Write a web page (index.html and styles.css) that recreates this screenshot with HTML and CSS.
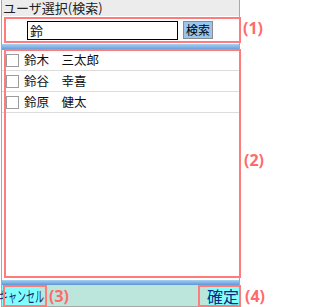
FILE: index.html
```html
<!DOCTYPE html>
<html lang="ja">
<head>
<meta charset="utf-8">
<link rel="stylesheet" href="styles.css">
</head>
<body>
<div class="page">
  <div class="app">
    <div class="title">ユーザ選択(検索)</div>
    <div class="search">
      <div class="input">鈴</div>
      <div class="btn">検索</div>
    </div>
    <div class="bar"></div>
    <ul class="list">
      <li class="row"><span class="check"></span><span class="name">鈴木　三太郎</span></li>
      <li class="row"><span class="check"></span><span class="name">鈴谷　幸喜</span></li>
      <li class="row"><span class="check"></span><span class="name">鈴原　健太</span></li>
    </ul>
    <div class="bar bar-bottom"></div>
    <div class="footer">
      <div class="cancel"><span class="cancel-text">キャンセル</span></div>
      <span class="ok">確定</span>
    </div>
  </div>

  <div class="ann box1"></div>
  <div class="ann box2"></div>
  <div class="ann box3"></div>
  <div class="ann box4"></div>
  <div class="tag tag1">(1)</div>
  <div class="tag tag2">(2)</div>
  <div class="tag tag3">(3)</div>
  <div class="tag tag4">(4)</div>
</div>
</body>
</html>
```
FILE: styles.css
```css
html, body {
  margin: 0;
  padding: 0;
  background: #fff;
}
body {
  font-family: "Noto Sans CJK JP", "Noto Sans", sans-serif;
  font-size: 12px;
  color: #111;
}
.page {
  position: relative;
  width: 270px;
  height: 307px;
  overflow: hidden;
}
.app {
  margin-left: 1px;
  width: 239px;
  box-sizing: border-box;
  border-left: 1px solid #a8a8a8;
  border-right: 1px solid #a8a8a8;
  border-bottom: 1px solid #a8a8a8;
  display: flex;
  flex-direction: column;
}
.title {
  height: 16px;
  line-height: 16px;
  background: #ececec;
  padding-left: 1px;
  font-size: 13px;
  color: #222;
  white-space: nowrap;
}
.search {
  height: 28px;
  box-sizing: border-box;
  padding: 5px 0 0 25px;
  display: flex;
  align-items: flex-start;
  gap: 5px;
}
.input {
  box-sizing: border-box;
  width: 151px;
  height: 19px;
  border: 1px solid #000;
  padding-left: 2px;
  font-size: 13px;
  line-height: 17px;
  background: #fff;
}
.btn {
  box-sizing: border-box;
  width: 30px;
  height: 18px;
  border: 1px solid #8c8c8c;
  background: #99c6ee;
  font-size: 12px;
  line-height: 16px;
  text-align: center;
  color: #000;
}
.bar {
  height: 6px;
  background: linear-gradient(#a8d0f2, #5b98d6);
}
.bar-bottom {
  height: 5px;
}
.list {
  list-style: none;
  margin: 0;
  padding: 0;
  height: 230px;
}
.row {
  height: 20px;
  border-bottom: 1px solid #dcdcdc;
  display: flex;
  align-items: center;
  gap: 5px;
  padding-left: 4px;
}
.check {
  width: 13px;
  height: 13px;
  box-sizing: border-box;
  border: 1px solid #9c9c9c;
  background: #fff;
}
.name {
  font-size: 12.5px;
  line-height: 20px;
  color: #111;
}
.footer {
  height: 21px;
  background: #bce5db;
  display: flex;
  justify-content: space-between;
  align-items: flex-end;
}
.cancel {
  width: 38px;
  height: 21px;
  background: #80ffff;
  display: flex;
  justify-content: center;
  align-items: center;
  overflow: visible;
}
.cancel-text {
  display: inline-block;
  flex: none;
  font-size: 15px;
  line-height: 21px;
  color: #14287a;
  transform: scaleX(0.6);
  white-space: nowrap;
}
.ok {
  background: #80ffff;
  font-size: 16px;
  line-height: 19px;
  color: #14287a;
  padding: 0;
}
.ann {
  position: absolute;
  box-sizing: border-box;
  border: 2px solid #ff7c7c;
}
.box1 { left: 4px; top: 17px; width: 237px; height: 26px; }
.box2 { left: 4px; top: 49px; width: 237px; height: 229px; }
.box3 { left: 3px; top: 285px; width: 44px; height: 22px; }
.box4 { left: 198px; top: 285px; width: 43px; height: 22px; }
.tag {
  position: absolute;
  font-family: "Noto Sans", "DejaVu Sans", sans-serif;
  font-weight: 700;
  font-size: 16px;
  line-height: 20px;
  color: #ff6b6b;
}
.tag1 { left: 243px; top: 18px; }
.tag2 { left: 244px; top: 150px; }
.tag3 { left: 49px; top: 286px; }
.tag4 { left: 245px; top: 286px; }
```
